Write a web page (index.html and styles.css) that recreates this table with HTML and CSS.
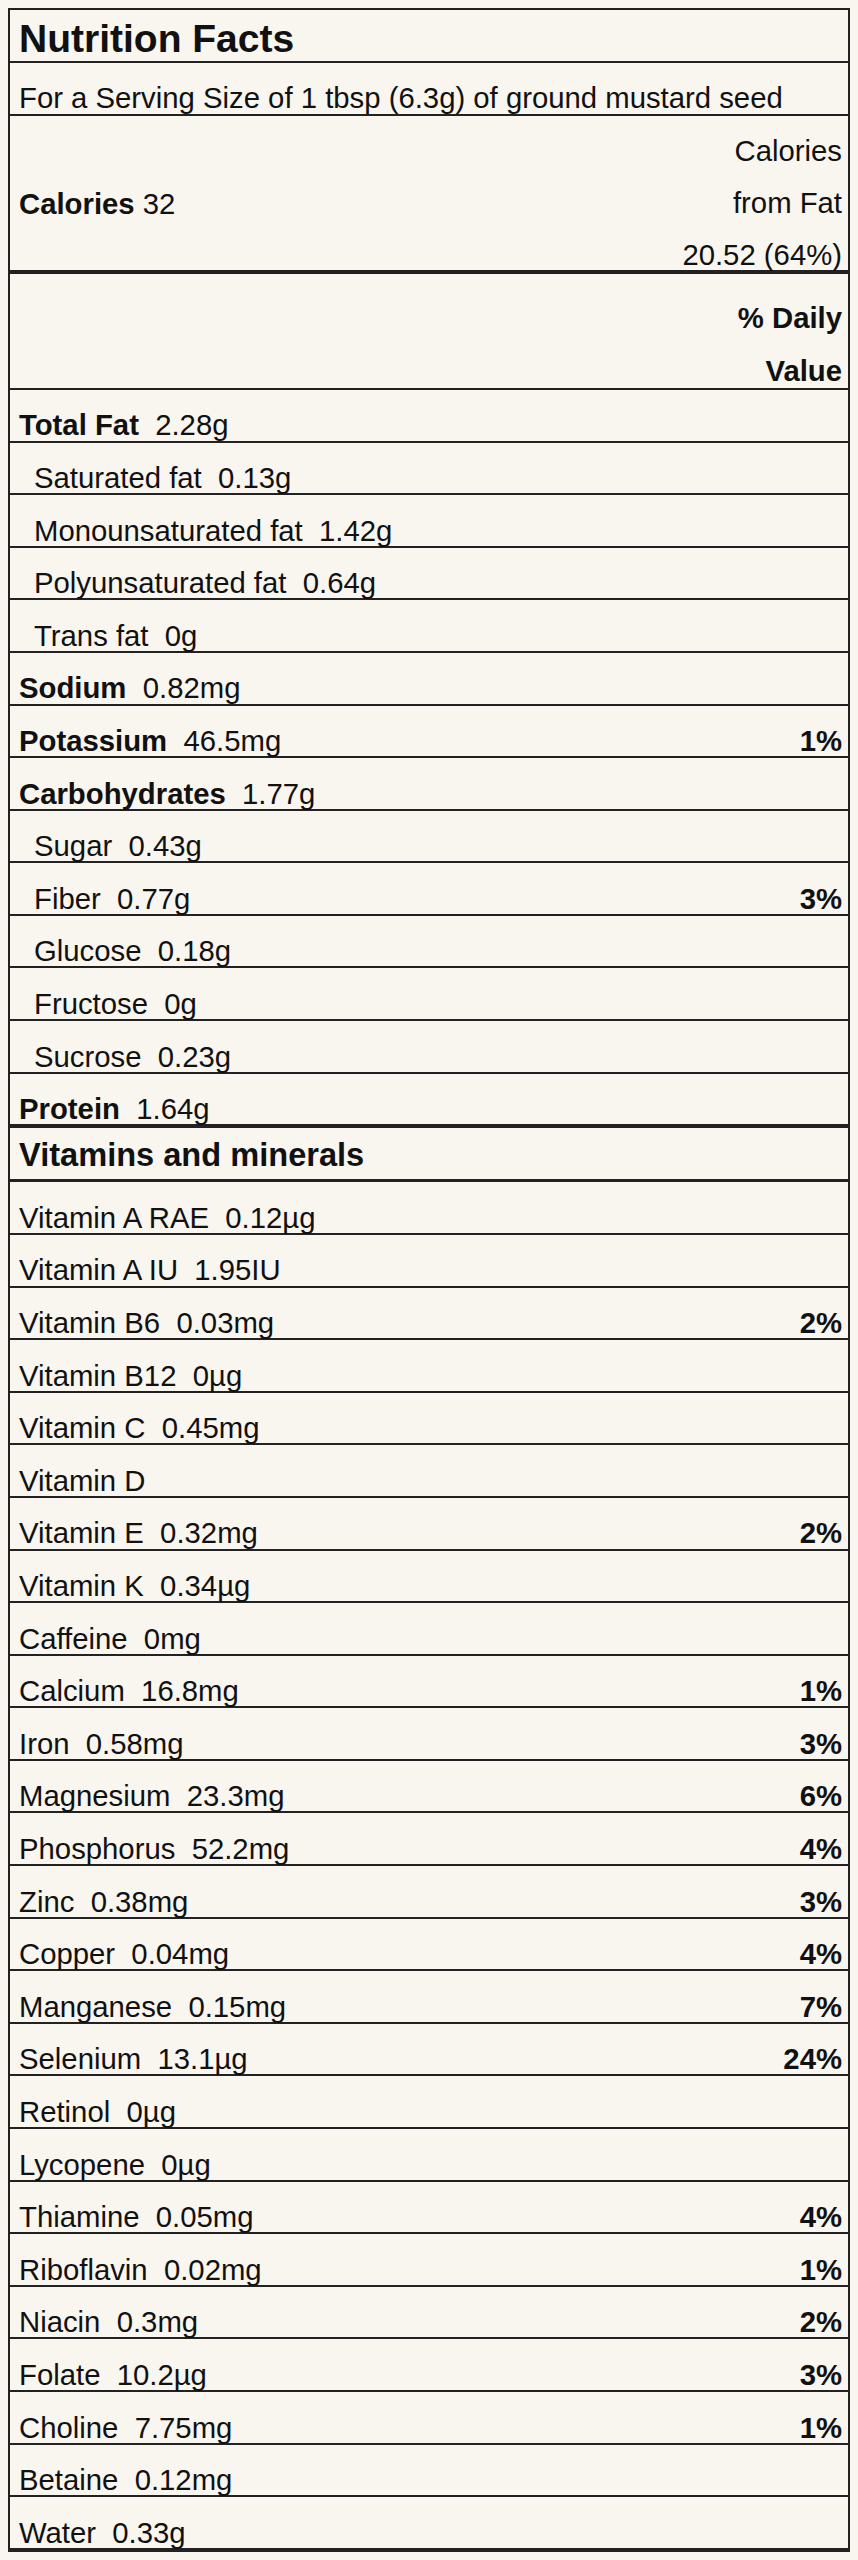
FILE: index.html
```html
<!DOCTYPE html>
<html>
<head>
<meta charset="utf-8">
<link rel="stylesheet" href="styles.css">
</head>
<body>
<div class="label">
  <div class="row title">Nutrition Facts</div>
  <div class="row">For a Serving Size of 1 tbsp (6.3g) of ground mustard seed</div>
  <div class="row cal">
    <div class="cal-left"><b>Calories</b> 32</div>
    <div class="lines"><span>Calories</span><span>from Fat</span><span>20.52 (64%)</span></div>
  </div>
  <div class="row dv">
    <div class="lines dv-lines"><span>% Daily</span><span>Value</span></div>
  </div>
  <div class="row"><span><b>Total Fat</b>&nbsp; 2.28g</span></div>
  <div class="row sub"><span>Saturated fat&nbsp; 0.13g</span></div>
  <div class="row sub"><span>Monounsaturated fat&nbsp; 1.42g</span></div>
  <div class="row sub"><span>Polyunsaturated fat&nbsp; 0.64g</span></div>
  <div class="row sub"><span>Trans fat&nbsp; 0g</span></div>
  <div class="row"><span><b>Sodium</b>&nbsp; 0.82mg</span></div>
  <div class="row"><span><b>Potassium</b>&nbsp; 46.5mg</span><b>1%</b></div>
  <div class="row"><span><b>Carbohydrates</b>&nbsp; 1.77g</span></div>
  <div class="row sub"><span>Sugar&nbsp; 0.43g</span></div>
  <div class="row sub"><span>Fiber&nbsp; 0.77g</span><b>3%</b></div>
  <div class="row sub"><span>Glucose&nbsp; 0.18g</span></div>
  <div class="row sub"><span>Fructose&nbsp; 0g</span></div>
  <div class="row sub"><span>Sucrose&nbsp; 0.23g</span></div>
  <div class="row thick"><span><b>Protein</b>&nbsp; 1.64g</span></div>
  <div class="row section">Vitamins and minerals</div>
  <div class="row"><span>Vitamin A RAE&nbsp; 0.12µg</span></div>
  <div class="row"><span>Vitamin A IU&nbsp; 1.95IU</span></div>
  <div class="row"><span>Vitamin B6&nbsp; 0.03mg</span><b>2%</b></div>
  <div class="row"><span>Vitamin B12&nbsp; 0µg</span></div>
  <div class="row"><span>Vitamin C&nbsp; 0.45mg</span></div>
  <div class="row"><span>Vitamin D</span></div>
  <div class="row"><span>Vitamin E&nbsp; 0.32mg</span><b>2%</b></div>
  <div class="row"><span>Vitamin K&nbsp; 0.34µg</span></div>
  <div class="row"><span>Caffeine&nbsp; 0mg</span></div>
  <div class="row"><span>Calcium&nbsp; 16.8mg</span><b>1%</b></div>
  <div class="row"><span>Iron&nbsp; 0.58mg</span><b>3%</b></div>
  <div class="row"><span>Magnesium&nbsp; 23.3mg</span><b>6%</b></div>
  <div class="row"><span>Phosphorus&nbsp; 52.2mg</span><b>4%</b></div>
  <div class="row"><span>Zinc&nbsp; 0.38mg</span><b>3%</b></div>
  <div class="row"><span>Copper&nbsp; 0.04mg</span><b>4%</b></div>
  <div class="row"><span>Manganese&nbsp; 0.15mg</span><b>7%</b></div>
  <div class="row"><span>Selenium&nbsp; 13.1µg</span><b>24%</b></div>
  <div class="row"><span>Retinol&nbsp; 0µg</span></div>
  <div class="row"><span>Lycopene&nbsp; 0µg</span></div>
  <div class="row"><span>Thiamine&nbsp; 0.05mg</span><b>4%</b></div>
  <div class="row"><span>Riboflavin&nbsp; 0.02mg</span><b>1%</b></div>
  <div class="row"><span>Niacin&nbsp; 0.3mg</span><b>2%</b></div>
  <div class="row"><span>Folate&nbsp; 10.2µg</span><b>3%</b></div>
  <div class="row"><span>Choline&nbsp; 7.75mg</span><b>1%</b></div>
  <div class="row"><span>Betaine&nbsp; 0.12mg</span></div>
  <div class="row"><span>Water&nbsp; 0.33g</span></div>
</div>
</body>
</html>
```
FILE: styles.css
```css
html, body {
  background: #f9f5ef;
}
body {
  margin: 8px;
  font-family: "Liberation Sans", Arial, Helvetica, sans-serif;
  color: #111;
}
.label {
  border: 2px solid #222;
  border-bottom-width: 4px;
}
.row {
  display: flex;
  justify-content: space-between;
  align-items: flex-start;
  padding: 21.5px 6px 1.5px 9px;
  font-size: 29.3px;
  line-height: 27.6px;
  white-space: nowrap;
  border-bottom: 2px solid #222;
}
.row:last-child {
  border-bottom: none;
}
.row b {
  font-weight: bold;
}
.sub {
  padding-left: 24px;
}
.title {
  font-size: 39px;
  line-height: 39px;
  font-weight: bold;
  padding-top: 9.3px;
  padding-bottom: 2.7px;
}
.cal {
  padding-top: 0;
  padding-bottom: 0;
  border-bottom-width: 4px;
}
.cal-left {
  padding-top: 74px;
}
.lines {
  display: flex;
  flex-direction: column;
  align-items: flex-end;
  gap: 24.5px;
  padding: 21px 0 1.5px;
}
.dv {
  justify-content: flex-end;
  padding-top: 0;
  padding-bottom: 0;
}
.dv-lines {
  font-weight: bold;
  gap: 25.4px;
  padding-top: 30.5px;
  padding-bottom: 3px;
}
.thick {
  border-bottom-width: 4px;
}
.section {
  font-size: 32.6px;
  font-weight: bold;
  line-height: 31.6px;
  padding-top: 11px;
  padding-bottom: 8.5px;
  border-bottom-width: 3px;
}
```
